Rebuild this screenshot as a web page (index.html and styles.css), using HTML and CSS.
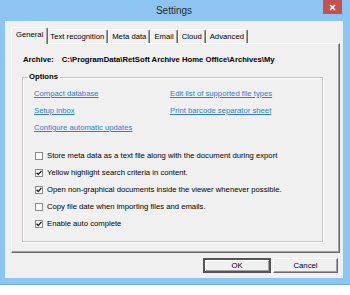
FILE: index.html
```html
<!DOCTYPE html>
<html lang="en">
<head>
  <meta charset="UTF-8" />
  <title>Settings</title>
  <link rel="stylesheet" href="styles.css">
</head>
<body>
  <div class="window">
    <!-- Title bar -->
    <div class="titlebar">
      <span></span>
      <span class="title">Settings</span>
      <button class="close" aria-label="Close">
        <svg width="7" height="7" viewBox="0 0 7 7"><path d="M1 1 L6 6 M6 1 L1 6" stroke="#fff" stroke-width="1.6"/></svg>
      </button>
    </div>

    <div class="client">
      <!-- Tabs -->
      <div class="tabs">
        <div class="tab active">General</div>
        <div class="tab">Text recognition</div>
        <div class="tab">Meta data</div>
        <div class="tab">Email</div>
        <div class="tab">Cloud</div>
        <div class="tab">Advanced</div>
      </div>

      <!-- General page -->
      <div class="panel">
        <div class="archive">
          <span class="label">Archive:</span>
          <span>C:\ProgramData\RetSoft Archive Home Office\Archives\My</span>
        </div>

        <fieldset class="options">
          <legend>Options</legend>
          <div class="links">
            <a href="#">Compact database</a>
            <a href="#">Edit list of supported file types</a>
            <a href="#">Setup inbox</a>
            <a href="#">Print barcode separator sheet</a>
            <a href="#">Configure automatic updates</a>
          </div>

          <div class="checks">
            <label class="check"><span class="box"></span>Store meta data as a text file along with the document during export</label>
            <label class="check"><span class="box checked"><svg width="6" height="6" viewBox="0 0 6 6"><path d="M0.6 2.8 L2.3 4.6 L5.4 0.8" fill="none" stroke="#111" stroke-width="1.3"/></svg></span>Yellow highlight search criteria in content.</label>
            <label class="check"><span class="box checked"><svg width="6" height="6" viewBox="0 0 6 6"><path d="M0.6 2.8 L2.3 4.6 L5.4 0.8" fill="none" stroke="#111" stroke-width="1.3"/></svg></span>Open non-graphical documents inside the viewer whenever possible.</label>
            <label class="check"><span class="box"></span>Copy file date when importing files and emails.</label>
            <label class="check"><span class="box checked"><svg width="6" height="6" viewBox="0 0 6 6"><path d="M0.6 2.8 L2.3 4.6 L5.4 0.8" fill="none" stroke="#111" stroke-width="1.3"/></svg></span>Enable auto complete</label>
          </div>
        </fieldset>
      </div>

      <!-- Dialog buttons -->
      <div class="buttons">
        <button class="btn default">OK</button>
        <button class="btn">Cancel</button>
      </div>
    </div>
  </div>
</body>
</html>
```

FILE: styles.css
```css
* {
  margin: 0;
  padding: 0;
  box-sizing: border-box;
}
body {
  width: 350px;
  height: 295px;
  background: #fff;
  font-family: 'Liberation Sans', Arial, sans-serif;
  font-size: 7.7px;
  color: #000;
  overflow: hidden;
}
/* Window frame */
.window {
  width: 350px;
  height: 285px;
  background: #8cc4f2;
  border-bottom: 1px solid #74afe2;
  padding: 0 7px 6px 5px;
  display: flex;
  flex-direction: column;
}
.titlebar {
  height: 21px;
  display: grid;
  grid-template-columns: 1fr auto 1fr;
  align-items: center;
}
.titlebar .title {
  font-size: 10px;
  color: #2b2b2b;
  padding-bottom: 1px;
}
.titlebar .close {
  justify-self: end;
  align-self: start;
  width: 19px;
  height: 14px;
  margin-right: 1px;
  background: #c75050;
  border: none;
  display: flex;
  align-items: center;
  justify-content: center;
}
/* Client area */
.client {
  flex: 1;
  background: #f0f0f0;
  padding: 6px 3px 0 6px;
  display: flex;
  flex-direction: column;
}
.tabs {
  height: 16px;
  display: flex;
  align-items: flex-end;
  padding-left: 2px;
  position: relative;
  z-index: 1;
}
.tab {
  height: 14px;
  line-height: 13px;
  padding: 0 3px 0 3px;
  border-top: 1px solid #fff;
  border-left: 1px solid #fff;
  border-right: 1px solid #696969;
  box-shadow: inset -1px 0 0 #a0a0a0;
  border-radius: 2px 2px 0 0;
  white-space: nowrap;
}
.tab.active {
  height: 17px;
  line-height: 14px;
  margin: 0 -1px -1px -2px;
  padding: 0 4px 0 4px;
  background: #f0f0f0;
  position: relative;
  z-index: 2;
}
.tab.active + .tab {
  border-left: none;
}
.panel {
  height: 210px;
  border-top: 1px solid #fff;
  border-left: 1px solid #fff;
  border-right: 1px solid #696969;
  border-bottom: 1px solid #696969;
  box-shadow: inset -1px -1px 0 #a0a0a0;
  padding: 10px 0 0 10px;
}
.archive {
  height: 12px;
  line-height: 12px;
  padding-left: 1px;
  font-weight: bold;
  display: flex;
  gap: 8px;
  white-space: nowrap;
}
/* Options group */
.options {
  width: 301px;
  margin-top: 5px;
  border: 1px solid #c4c4c4;
  box-shadow: 1px 1px 0 #fff, inset 1px 1px 0 #fff;
  padding: 5px 0 11px 11px;
}
.options legend {
  margin-left: -6px;
  padding: 0 2px 0 1px;
  line-height: 12px;
  font-weight: bold;
}
.links {
  display: grid;
  grid-template-columns: 136px auto;
  row-gap: 5px;
  line-height: 12px;
}
.links a {
  color: #2f7bd9;
  text-decoration: underline;
  justify-self: start;
  white-space: nowrap;
}
.checks {
  margin-top: 16px;
  display: flex;
  flex-direction: column;
  gap: 5px;
}
.check {
  height: 12px;
  line-height: 12px;
  display: flex;
  align-items: center;
  gap: 4px;
  margin-left: 1px;
  white-space: nowrap;
}
.box {
  width: 8px;
  height: 8px;
  border: 1px solid #8a8a8a;
  background: #fff;
  display: flex;
  align-items: center;
  justify-content: center;
  flex-shrink: 0;
}
/* Dialog buttons */
.buttons {
  display: flex;
  justify-content: flex-end;
  gap: 2px;
  padding: 5px 2px 0 0;
}
.btn {
  width: 65px;
  height: 15px;
  font-family: inherit;
  font-size: 7.7px;
  color: #000;
  background: #f0f0f0;
  border-top: 1px solid #fff;
  border-left: 1px solid #fff;
  border-right: 1px solid #696969;
  border-bottom: 1px solid #696969;
  box-shadow: inset -1px -1px 0 #a0a0a0;
}
.btn.default {
  width: 68px;
  border: 2px solid #555;
  box-shadow: inset 1px 1px 0 #fff, inset -1px -1px 0 #a0a0a0;
}
```
